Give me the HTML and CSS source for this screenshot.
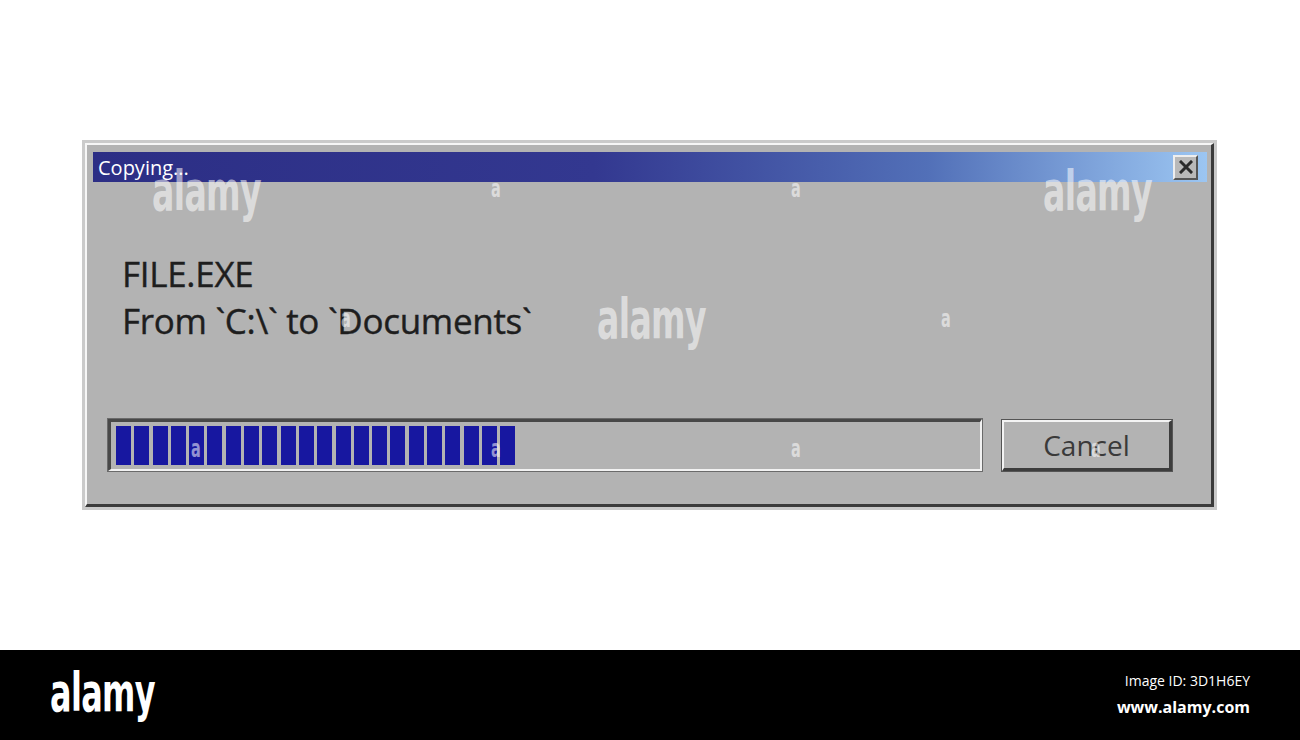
FILE: index.html
```html
<!DOCTYPE html>
<html lang="en">
<head>
  <meta charset="UTF-8">
  <title>Copying...</title>
  <link rel="stylesheet" href="styles.css">
</head>
<body>

  <main class="stage">
    <section class="dialog">
      <div class="dialog-inner">
        <header class="titlebar">
          <span class="title">Copying...</span>
          <button class="close" type="button" aria-label="Close">
            <svg width="14" height="14" viewBox="0 0 14 14">
              <path d="M2 2 L12 12 M12 2 L2 12" stroke="#2a2a2a" stroke-width="3" stroke-linecap="square"/>
            </svg>
          </button>
        </header>

        <div class="message">
          <p>FILE.EXE</p>
          <p>From `C:\` to `Documents`</p>
        </div>

        <div class="actions">
          <div class="progress" id="progress"></div>
          <button class="cancel" type="button">Cancel</button>
        </div>
      </div>
    </section>

    <!-- stock watermark marks -->
    <span class="mark big" style="left:152px;top:161px">alamy</span>
    <span class="mark big" style="left:1043px;top:161px">alamy</span>
    <span class="mark big" style="left:597px;top:289px">alamy</span>
    <span class="mark small" style="left:491px;top:176px">a</span>
    <span class="mark small" style="left:791px;top:176px">a</span>
    <span class="mark small" style="left:941px;top:306px">a</span>
    <span class="mark small" style="left:341px;top:306px">a</span>
    <span class="mark small" style="left:191px;top:436px">a</span>
    <span class="mark small" style="left:491px;top:436px">a</span>
    <span class="mark small" style="left:791px;top:436px">a</span>
    <span class="mark small" style="left:1091px;top:436px">a</span>
  </main>

  <footer class="credit">
    <span class="logo">alamy</span>
    <div class="ids">
      <span>Image ID: 3D1H6EY</span>
      <strong>www.alamy.com</strong>
    </div>
  </footer>

  <script>
    // fill the progress bar with 22 of its segments
    var bar = document.getElementById('progress');
    for (var i = 0; i < 22; i++) {
      var seg = document.createElement('span');
      seg.className = 'seg';
      bar.appendChild(seg);
    }
  </script>

</body>
</html>
```

FILE: styles.css
```css
body {
  margin: 0;
  background-color: #fff;
  font-family: "Open Sans", "Liberation Sans", sans-serif;
}
.stage {
  position: relative;
  height: 650px;
  padding: 140px 0 0 82px;
  box-sizing: border-box;
}
.dialog {
  width: 1135px;
  height: 370px;
  box-sizing: border-box;
  border: 3px solid #cacaca;
}
.dialog-inner {
  height: 100%;
  box-sizing: border-box;
  background-color: #b3b3b3;
  border-top: 2px solid #f6f6f6;
  border-left: 2px solid #f6f6f6;
  border-right: 3px solid #3b3b3b;
  border-bottom: 3px solid #3b3b3b;
  padding: 7px 4px 0 6px;
}
.titlebar {
  height: 30px;
  display: flex;
  align-items: center;
  justify-content: space-between;
  padding: 0 9px 0 5px;
  background: linear-gradient(to right, #2c2e85 0%, #333890 45%, #5270b8 75%, #9cc6f2 100%);
}
.title {
  color: #fff;
  font-size: 20px;
}
.close {
  width: 25px;
  height: 25px;
  padding: 0;
  display: flex;
  align-items: center;
  justify-content: center;
  background-color: #b9b9b9;
  border-top: 2px solid #eee;
  border-left: 2px solid #eee;
  border-right: 2px solid #555;
  border-bottom: 2px solid #555;
}
.message {
  margin: 68px 0 0 29px;
  color: #1e1e1e;
  font-size: 35px;
  line-height: 47px;
  letter-spacing: -0.3px;
  -webkit-text-stroke: 0.4px #1e1e1e;
}
.message p {
  margin: 0;
}
.actions {
  display: flex;
  gap: 20px;
  margin: 75px 0 0 15px;
}
.progress {
  width: 874px;
  height: 52px;
  box-sizing: border-box;
  display: flex;
  gap: 3.3px;
  padding: 4px 5px;
  background-color: #b3b3b3;
  border-top: 3px solid #484848;
  border-left: 3px solid #484848;
  border-right: 2px solid #f2f2f2;
  border-bottom: 2px solid #f2f2f2;
  box-shadow: 0 0 0 1px #6a6a6a;
}
.seg {
  width: 15px;
  background-color: #1717a0;
}
.cancel {
  width: 170px;
  height: 51px;
  box-sizing: border-box;
  margin-top: 1px;
  background-color: #b3b3b3;
  border-top: 2px solid #f4f4f4;
  border-left: 2px solid #f4f4f4;
  border-right: 3px solid #3d3d3d;
  border-bottom: 3px solid #3d3d3d;
  box-shadow: 0 0 0 1px #555;
  font-family: "Open Sans", "Liberation Sans", sans-serif;
  font-size: 28px;
  color: #3a3a3a;
  padding: 0;
}
.mark {
  position: absolute;
  color: rgba(255, 255, 255, 0.55);
  font-family: "DejaVu Sans Condensed", "DejaVu Sans", sans-serif;
  font-weight: bold;
  letter-spacing: -1px;
  transform: scaleX(0.67);
  transform-origin: left top;
}
.mark.big {
  font-size: 55px;
  line-height: 60px;
}
.mark.small {
  font-size: 24px;
  line-height: 26px;
}
.credit {
  height: 90px;
  background-color: #000;
  color: #fff;
  display: flex;
  align-items: center;
  justify-content: space-between;
  padding: 0 50px;
}
.logo {
  font-family: "DejaVu Sans Condensed", "DejaVu Sans", sans-serif;
  font-weight: bold;
  font-size: 53px;
  letter-spacing: -1px;
  margin-top: -6px;
  transform: scaleX(0.67);
  transform-origin: left center;
}
.ids {
  display: flex;
  flex-direction: column;
  align-items: flex-end;
  gap: 6px;
  font-size: 14px;
  margin-top: -2px;
}
.ids strong {
  font-size: 16px;
}
```
